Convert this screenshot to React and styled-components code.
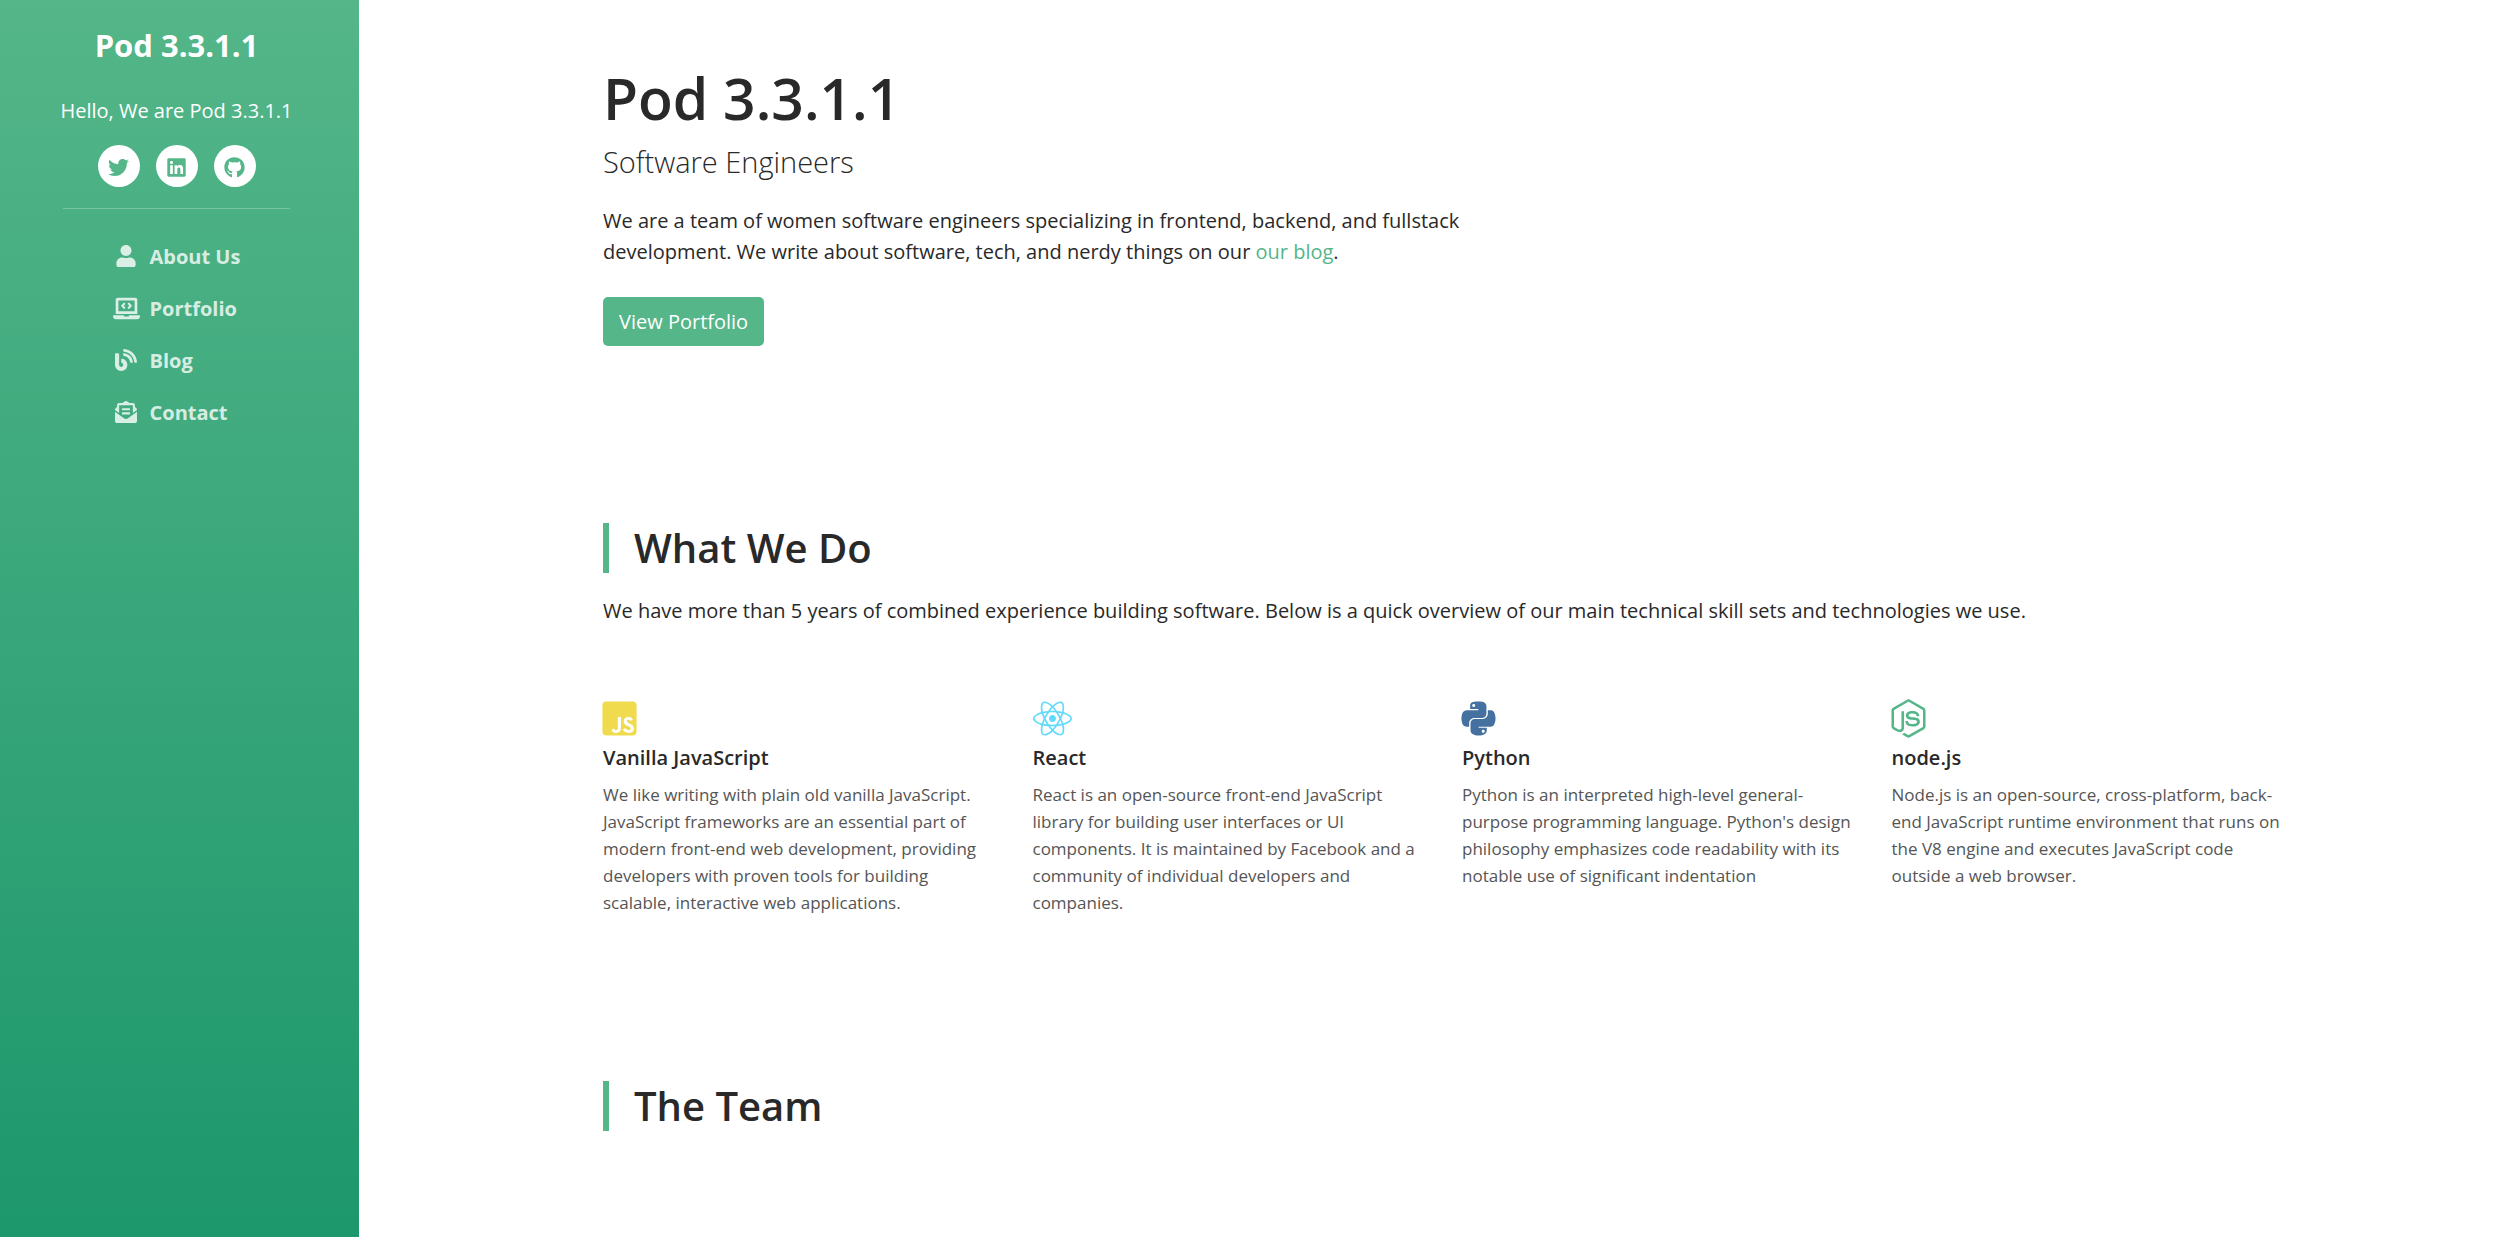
import React from "react";
import styled, { createGlobalStyle } from "styled-components";
import {
  FaTwitter,
  FaLinkedin,
  FaGithub,
  FaUser,
  FaLaptopCode,
  FaBlog,
  FaEnvelopeOpenText,
  FaJsSquare,
  FaReact,
  FaPython,
  FaNodeJs,
} from "react-icons/fa";

const GlobalStyle = createGlobalStyle`
  *, *::before, *::after { box-sizing: border-box; }
  html, body { margin: 0; background: #fff; }
  body {
    font-family: "Open Sans", "Noto Sans", sans-serif;
    font-size: 20px;
    line-height: 31px;
    color: #292929;
    overflow: hidden;
  }
  h1, h2, h3, p, ul { margin: 0; padding: 0; }
  a { color: #54b689; text-decoration: none; }
`;

const Page = styled.div`
  display: flex;
  height: 100vh;
`;

const Sidebar = styled.header`
  flex: 0 0 359px;
  padding: 20px 6px 0 0;
  display: flex;
  flex-direction: column;
  align-items: center;
  color: #fff;
  background: linear-gradient(to bottom, #54b689 0%, #1d976c 100%);
`;

const SiteName = styled.h1`
  font-size: 31px;
  line-height: 50px;
  font-weight: 700;
`;

const Profile = styled.div`
  width: 227px;
  margin-top: 25px;
  padding-bottom: 21px;
  display: flex;
  flex-direction: column;
  align-items: center;
  gap: 19px;
  white-space: nowrap;
  border-bottom: 1px solid rgba(255, 255, 255, 0.25);
`;

const SocialList = styled.ul`
  display: flex;
  gap: 16px;
  list-style: none;
`;

const SocialLink = styled.a`
  display: flex;
  align-items: center;
  justify-content: center;
  width: 42px;
  height: 42px;
  padding-top: 3px;
  border-radius: 50%;
  background: #fff;
  font-size: 21px;
`;

const NavList = styled.ul`
  width: 128px;
  margin-top: 21px;
  list-style: none;
`;

const NavLink = styled.a`
  display: flex;
  align-items: center;
  gap: 10px;
  height: 52px;
  color: rgba(255, 255, 255, 0.8);
  font-weight: 700;
  white-space: nowrap;
`;

const NavIcon = styled.span`
  display: flex;
  flex: 0 0 27px;
  justify-content: center;
  font-size: ${(p) => (p.$wide ? 27 : 22)}px;

  svg {
    flex: none;
  }
`;

const Main = styled.main`
  flex: 1;
  min-width: 0;
  overflow: hidden;
`;

const Section = styled.section`
  max-width: 1752px;
  margin: 0 auto;
  padding: ${(p) => p.$top}px 24px 78px 42px;
`;

const Title = styled.h2`
  font-size: 57px;
  line-height: 72px;
  font-weight: 600;
`;

const Tagline = styled.p`
  margin-top: 8px;
  font-size: 29px;
  line-height: 40px;
  font-weight: 300;
`;

const Bio = styled.p`
  max-width: 880px;
  margin: 23px 0 30px;
`;

const Button = styled.button`
  height: 49px;
  padding: 0 16px;
  border: 0;
  border-radius: 5px;
  background: #54b689;
  color: #fff;
  font: inherit;
`;

const SectionTitle = styled.h2`
  padding-left: 25px;
  border-left: 6px solid #54b689;
  font-size: 40px;
  line-height: 50px;
  font-weight: 600;
`;

const Lead = styled.p`
  margin-top: 22px;
`;

const SkillGrid = styled.div`
  display: grid;
  grid-template-columns: repeat(4, 1fr);
  column-gap: 32px;
  margin-top: 72px;
`;

const SkillIcon = styled.div`
  display: flex;
  align-items: center;
  height: 40px;
  margin-left: ${(p) => (p.$inset ? -3 : 0)}px;
  font-size: 39px;
  color: ${(p) => p.$color};
`;

const SkillName = styled.h3`
  margin-top: 4px;
  font-size: 20px;
  line-height: 31px;
  font-weight: 600;
`;

const SkillText = styled.p`
  margin-top: 8px;
  font-size: 17px;
  line-height: 27px;
  color: #555;
`;

const socials = [
  { name: "Twitter", Icon: FaTwitter },
  { name: "LinkedIn", Icon: FaLinkedin },
  { name: "GitHub", Icon: FaGithub },
];

const links = [
  { name: "About Us", Icon: FaUser },
  { name: "Portfolio", Icon: FaLaptopCode, wide: true },
  { name: "Blog", Icon: FaBlog },
  { name: "Contact", Icon: FaEnvelopeOpenText },
];

const skills = [
  {
    name: "Vanilla JavaScript",
    Icon: FaJsSquare,
    color: "#f0db4f",
    inset: true,
    text: "We like writing with plain old vanilla JavaScript. JavaScript frameworks are an essential part of modern front-end web development, providing developers with proven tools for building scalable, interactive web applications.",
  },
  {
    name: "React",
    Icon: FaReact,
    color: "#61dafb",
    text: "React is an open-source front-end JavaScript library for building user interfaces or UI components. It is maintained by Facebook and a community of individual developers and companies.",
  },
  {
    name: "Python",
    Icon: FaPython,
    color: "#4571a1",
    inset: true,
    text: "Python is an interpreted high-level general-purpose programming language. Python's design philosophy emphasizes code readability with its notable use of significant indentation",
  },
  {
    name: "node.js",
    Icon: FaNodeJs,
    color: "#54b689",
    inset: true,
    text: "Node.js is an open-source, cross-platform, back-end JavaScript runtime environment that runs on the V8 engine and executes JavaScript code outside a web browser.",
  },
];

export default function App() {
  return (
    <Page>
      <GlobalStyle />
      <Sidebar>
        <SiteName>Pod 3.3.1.1</SiteName>
        <Profile>
          <p>Hello, We are Pod 3.3.1.1</p>
          <SocialList>
            {socials.map(({ name, Icon }) => (
              <li key={name}>
                <SocialLink href="#" aria-label={name}>
                  <Icon />
                </SocialLink>
              </li>
            ))}
          </SocialList>
        </Profile>
        <nav>
          <NavList>
            {links.map(({ name, Icon, wide }) => (
              <li key={name}>
                <NavLink href="#">
                  <NavIcon $wide={wide}>
                    <Icon />
                  </NavIcon>
                  {name}
                </NavLink>
              </li>
            ))}
          </NavList>
        </nav>
      </Sidebar>
      <Main>
        <Section $top={62}>
          <Title>Pod 3.3.1.1</Title>
          <Tagline>Software Engineers</Tagline>
          <Bio>
            We are a team of women software engineers specializing in frontend, backend, and
            fullstack development. We write about software, tech, and nerdy things on our{" "}
            <a href="#">our blog</a>.
          </Bio>
          <Button type="button">View Portfolio</Button>
        </Section>
        <Section $top={99}>
          <SectionTitle>What We Do</SectionTitle>
          <Lead>
            We have more than 5 years of combined experience building software. Below is a quick
            overview of our main technical skill sets and technologies we use.
          </Lead>
          <SkillGrid>
            {skills.map(({ name, Icon, color, inset, text }) => (
              <article key={name}>
                <SkillIcon $color={color} $inset={inset}>
                  <Icon />
                </SkillIcon>
                <SkillName>{name}</SkillName>
                <SkillText>{text}</SkillText>
              </article>
            ))}
          </SkillGrid>
        </Section>
        <Section $top={87}>
          <SectionTitle>The Team</SectionTitle>
        </Section>
      </Main>
    </Page>
  );
}
